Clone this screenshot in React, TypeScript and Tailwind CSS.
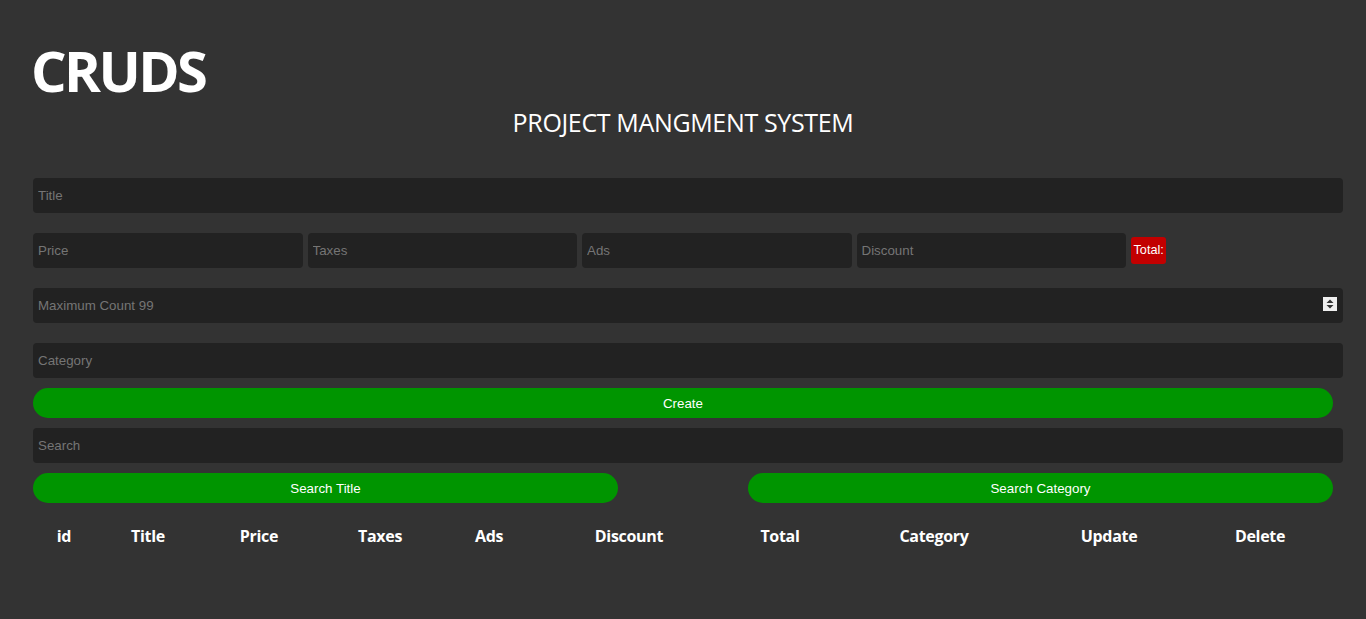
import React from "react";

const inputCls =
  "block w-full h-[35px] bg-[#222222] rounded-[4px] pl-[5px] text-[13.33px] text-white outline-none placeholder:text-[#757575] [font-family:'Liberation_Sans',Arial,sans-serif]";

const btnCls =
  "h-[30px] pt-[2px] rounded-full bg-[#009500] text-white text-[13.33px] [font-family:'Liberation_Sans',Arial,sans-serif]";

const headers: { label: string; w: number }[] = [
  { label: "id", w: 62 },
  { label: "Title", w: 106 },
  { label: "Price", w: 116 },
  { label: "Taxes", w: 126 },
  { label: "Ads", w: 92 },
  { label: "Discount", w: 188 },
  { label: "Total", w: 114 },
  { label: "Category", w: 194 },
  { label: "Update", w: 156 },
  { label: "Delete", w: 146 },
];

export default function App() {
  return (
    <div className="min-h-[619px] bg-[#333333] text-white [font-family:'Open_Sans','Noto_Sans',sans-serif]">
      <div className="ml-[33px] w-[1310px] pt-[42px]">
        <h1 className="-ml-[2px] text-[56px] font-bold leading-none tracking-[-2.6px]">CRUDS</h1>
        <h2 className="mt-[12px] w-[1300px] text-center text-[25px] leading-none tracking-[-0.35px]">
          PROJECT MANGMENT SYSTEM
        </h2>

        <div className="mt-[43px]">
          <input className={inputCls} placeholder="Title" />
        </div>

        <div className="mt-[20px] flex items-center gap-[5px]">
          <input className={inputCls + " !w-[269.5px] shrink-0"} placeholder="Price" />
          <input className={inputCls + " !w-[269.5px] shrink-0"} placeholder="Taxes" />
          <input className={inputCls + " !w-[269.5px] shrink-0"} placeholder="Ads" />
          <input className={inputCls + " !w-[269.5px] shrink-0"} placeholder="Discount" />
          <span className="h-[27px] px-[2.5px] flex items-center bg-[#c20000] rounded-[3px] text-[12.7px] text-white [font-family:'Liberation_Sans',Arial,sans-serif]">
            Total:
          </span>
        </div>

        <div className="mt-[20px] relative">
          <input className={inputCls} placeholder="Maximum Count 99" />
          <div className="absolute right-[6px] top-[9px] w-[14px] h-[14px] bg-[#efefef] flex items-center justify-center">
            <svg width="8" height="10" viewBox="0 0 8 10">
              <path d="M4 0.5 L7.5 4 L0.5 4 Z" fill="#333" />
              <path d="M0.5 6 L7.5 6 L4 9.5 Z" fill="#333" />
            </svg>
          </div>
        </div>

        <div className="mt-[20px]">
          <input className={inputCls} placeholder="Category" />
        </div>

        <button className={btnCls + " mt-[10px] block w-[1300px]"}>Create</button>

        <div className="mt-[10px]">
          <input className={inputCls} placeholder="Search" />
        </div>

        <div className="mt-[10px] flex w-[1300px] justify-between">
          <button className={btnCls + " w-[585px]"}>Search Title</button>
          <button className={btnCls + " w-[585px]"}>Search Category</button>
        </div>

        <div className="mt-[23px] flex h-[20px] items-center">
          {headers.map((h) => (
            <div
              key={h.label}
              className="text-center text-[16px] font-bold leading-none tracking-[-0.3px]"
              style={{ width: h.w }}
            >
              {h.label}
            </div>
          ))}
        </div>
      </div>
    </div>
  );
}
